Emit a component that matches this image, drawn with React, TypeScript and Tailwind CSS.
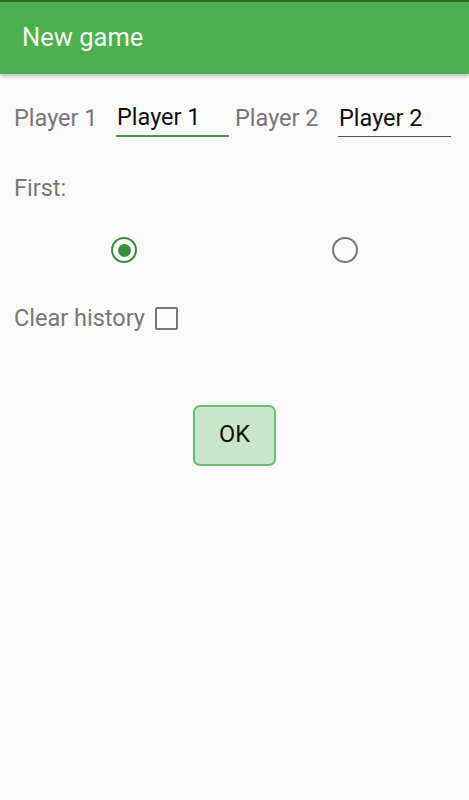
import { useState } from 'react';

export default function App() {
  const [first, setFirst] = useState(0);
  const [clear, setClear] = useState(false);
  const [p1, setP1] = useState('Player 1');
  const [p2, setP2] = useState('Player 2');

  return (
    <div className="min-h-[800px] bg-[#fafafa] font-['Roboto',sans-serif]">
      <header className="h-[74px] bg-[#4caf50] border-t-2 border-[#2e6b31] shadow-[0_2px_4px_rgba(0,0,0,0.25)] flex items-center px-[22px]">
        <h1 className="text-[25.5px] text-[#f1fbef] leading-none">New game</h1>
      </header>

      <div className="px-[14px]">
        <div className="flex items-center mt-[27px] h-[36px]">
          <span className="text-[23.5px] text-[#777] w-[102px]">Player 1</span>
          <div className="w-[113px] h-[36px] border-b-2 border-[#43a047] flex items-center">
            <input
              value={p1}
              onChange={(e) => setP1(e.target.value)}
              className="w-full bg-transparent outline-none text-[23.5px] text-[#111] pl-[1px]"
            />
          </div>
          <span className="text-[23.5px] text-[#777] ml-[6px] w-[103px]">Player 2</span>
          <div className="w-[113px] h-[36px] border-b border-[#555] flex items-center">
            <input
              value={p2}
              onChange={(e) => setP2(e.target.value)}
              className="w-full bg-transparent outline-none text-[23.5px] text-[#111] pl-[1px]"
            />
          </div>
        </div>

        <div className="mt-[34px] text-[23.5px] text-[#777]">First:</div>

        <div className="flex mt-[31px]">
          {[0, 1].map((i) => (
            <div key={i} className="flex-1 flex justify-center">
              <button
                onClick={() => setFirst(i)}
                className={`w-[26px] h-[26px] rounded-full border-[2.5px] flex items-center justify-center ${
                  first === i ? 'border-[#388e3c]' : 'border-[#757575]'
                }`}
              >
                {first === i && <span className="w-[13px] h-[13px] rounded-full bg-[#388e3c]" />}
              </button>
            </div>
          ))}
        </div>

        <div className="flex items-center mt-[38px]">
          <span className="text-[23.5px] text-[#777]">Clear history</span>
          <button
            onClick={() => setClear(!clear)}
            className={`ml-[10px] w-[23px] h-[23px] rounded-[2px] border-2 ${
              clear ? 'border-[#388e3c] bg-[#388e3c]' : 'border-[#757575]'
            }`}
          />
        </div>

        <div className="flex justify-center mt-[68px]">
          <button className="w-[83px] h-[61px] rounded-[7px] bg-[#c8e6c9] border-2 border-[#6abf6e] text-[23.5px] text-[#111]">
            OK
          </button>
        </div>
      </div>
    </div>
  );
}
